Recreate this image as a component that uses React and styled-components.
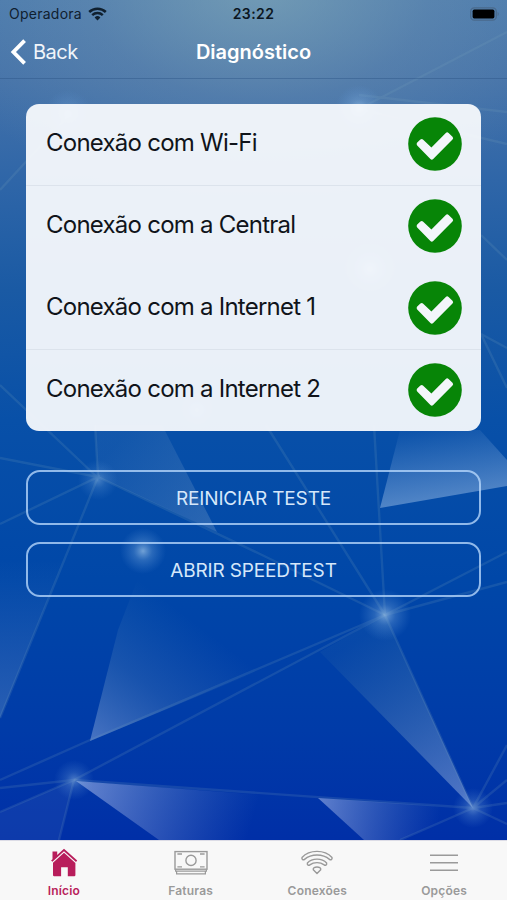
import React from 'react';
import styled, { createGlobalStyle } from 'styled-components';

const FONT = "Inter, 'Liberation Sans', sans-serif";
const ACCENT = '#b81d5b';
const TAB_GRAY = '#9a9a9a';
const CHECK_GREEN = '#078507';

const GlobalStyle = createGlobalStyle`
  body {
    margin: 0;
    font-family: ${FONT};
  }
  * {
    box-sizing: border-box;
  }
`;

const Screen = styled.div`
  position: relative;
  width: 507px;
  height: 900px;
  display: flex;
  flex-direction: column;
  overflow: hidden;
  background:
    radial-gradient(ellipse 340px 220px at 260px -10px, rgba(142, 178, 186, 0.58), rgba(130, 160, 180, 0.26) 50%, transparent),
    linear-gradient(#4a7aad 0, #4472a9 80px, #2f66a8 180px, #1a5aa4 290px, #0850a8 420px, #0047a8 580px, #003ba8 730px, #002fa7 840px);
`;

const Backdrop = styled.svg`
  position: absolute;
  top: 0;
  left: 0;
  width: 507px;
  height: 840px;
`;

const StatusBar = styled.div`
  position: relative;
  height: 27px;
  display: grid;
  grid-template-columns: 1fr auto 1fr;
  align-items: center;
  padding: 0 6px 0 9px;
  font-size: 14px;
  color: #10202f;
`;

const Carrier = styled.div`
  display: flex;
  align-items: center;
  gap: 6px;
  letter-spacing: 0.25px;
`;

const Clock = styled.div`
  margin-right: 3px;
  font-weight: 600;
  letter-spacing: 0.4px;
  color: #0b1621;
`;

const BatterySlot = styled.div`
  display: flex;
  justify-content: flex-end;
`;

const NavBar = styled.header`
  position: relative;
  height: 52px;
  display: grid;
  grid-template-columns: 1fr auto 1fr;
  align-items: center;
  padding: 0 10px 2px;
  border-bottom: 1px solid rgba(40, 80, 130, 0.4);
  color: #fff;
`;

const BackButton = styled.a`
  display: flex;
  align-items: center;
  gap: 6px;
  font-size: 20px;
  letter-spacing: -0.5px;
  color: #f0f5fa;
`;

const Title = styled.h1`
  margin: 0;
  font-size: 20px;
  font-weight: 600;
  letter-spacing: 0;
`;

const Content = styled.main`
  position: relative;
  flex: 1;
  padding: 25px 26px 0;
`;

const Card = styled.div`
  height: 327px;
  border-radius: 13px;
  background: rgba(248, 250, 253, 0.94);
  overflow: hidden;
`;

const CheckRow = styled.div`
  height: 82px;
  display: flex;
  align-items: center;
  justify-content: space-between;
  padding: 0 19px 2px 20px;
  border-bottom: 1px solid ${({ $divider }) => ($divider ? '#dce3ec' : 'transparent')};
  font-size: 24px;
  letter-spacing: -0.76px;
  color: #10141a;
`;

const CheckLabel = styled.span`
  padding-bottom: 2px;
`;

const Actions = styled.div`
  display: flex;
  flex-direction: column;
  gap: 17px;
  margin-top: 39px;
`;

const OutlineButton = styled.button`
  height: 55px;
  padding: 1px 0 0;
  border: 2px solid rgba(185, 217, 252, 0.78);
  border-radius: 14px;
  background: transparent;
  font-family: inherit;
  font-size: 19px;
  letter-spacing: -0.16px;
  color: #d5e7fa;
`;

const TabBar = styled.nav`
  position: relative;
  height: 60px;
  display: grid;
  grid-template-columns: repeat(4, 1fr);
  background: #f8f8f8;
  border-top: 1px solid #dcdce6;
`;

const Tab = styled.a`
  display: flex;
  flex-direction: column;
  align-items: center;
  padding: 7px 0 0 1px;
  gap: 5px;
  font-size: 12px;
  line-height: 16px;
  font-weight: 600;
  letter-spacing: 0.2px;
  color: ${({ $active }) => ($active ? ACCENT : TAB_GRAY)};
`;

const SignalIcon = () => (
  <svg width="19" height="14" viewBox="0 0 19 14" fill="none" stroke="#10202f">
    <path d="M1.2 5 A12 12 0 0 1 17.8 5" strokeWidth="2.5" />
    <path d="M4.2 8.1 A7.6 7.6 0 0 1 14.8 8.1" strokeWidth="2.4" />
    <path d="M9.5 13.5 L6.6 10.5 A4.2 4.2 0 0 1 12.4 10.5 Z" fill="#10202f" stroke="none" />
  </svg>
);

const BatteryIcon = () => (
  <svg width="31" height="14" viewBox="0 0 31 14">
    <rect x="0.7" y="0.8" width="25.6" height="12.4" rx="3.6" fill="none" stroke="#4a6a8c" strokeWidth="1.3" />
    <rect x="2.6" y="2.6" width="21.8" height="8.8" rx="1.6" fill="#000" />
    <path d="M27.6 5 A2.3 2.3 0 0 1 27.6 9 Z" fill="#4a6a8c" />
  </svg>
);

const ChevronIcon = () => (
  <svg width="17" height="26" viewBox="0 0 17 26" fill="none" stroke="#fff" strokeWidth="3.8">
    <path d="M14.6 1.6 L3.4 13 L14.6 24.4" />
  </svg>
);

const CheckIcon = () => (
  <svg width="54" height="54" viewBox="0 0 54 54">
    <circle cx="27" cy="27" r="26.8" fill={CHECK_GREEN} />
    <path
      d="M9.2 28.4 Q7.9 27 9.2 25.6 L12.4 22.6 Q13.8 21.4 15.2 22.7 L23.4 30.5 L37.8 16 Q39.2 14.7 40.6 16 L44.5 19.8 Q45.8 21.2 44.5 22.6 L25.2 42 Q23.8 43.3 22.4 42 Z"
      fill="#f3f6fa"
    />
  </svg>
);

const HomeIcon = () => (
  <svg width="28" height="30" viewBox="0 0 28 30">
    <path d="M2.5 3.4 H7.2 V7 L14 0.8 L27.2 12.6 L26 14 L14 3.2 L2.4 13.8 L1.1 12.4 L2.5 11.2 Z" fill={ACCENT} />
    <path d="M3 14.7 L14 4.8 L25.4 15 V27.1 Q25.4 28.3 24.2 28.3 H17.8 V19.2 H11.1 V28.3 H4.2 Q3 28.3 3 27.1 Z" fill={ACCENT} />
  </svg>
);

const BillIcon = () => (
  <svg width="34" height="30" viewBox="0 0 34 30" fill="none" stroke={TAB_GRAY}>
    <rect x="1" y="3.6" width="32" height="17.6" strokeWidth="1.4" />
    <circle cx="17" cy="12.4" r="5.1" strokeWidth="1.4" />
    <path d="M3.4 6 H8 M26 6 H30.6 M3.4 18.8 H8 M26 18.8 H30.6" strokeWidth="1.3" />
    <path d="M1.6 21.2 V23.2 H32.4 V21.2 M2.6 23.2 V25.8 H31.4 V23.2" strokeWidth="1.2" />
  </svg>
);

const WifiOutlineIcon = () => (
  <svg width="34" height="30" viewBox="0 0 34 30" fill="none" stroke={TAB_GRAY} strokeWidth="1.4" strokeLinejoin="round">
    <path d="M2 9.4 C9.5 1.4 24.5 1.4 32 9.4 C32.6 11.6 30.6 12.3 29.5 11.4 C22.6 5.6 11.4 5.6 4.5 11.4 C3.4 12.3 1.4 11.6 2 9.4 Z" />
    <path d="M7.4 15 C12 9.8 22 9.8 26.6 15 C27.2 17 25.2 17.8 24.2 16.9 C20 13.8 14 13.8 9.8 16.9 C8.8 17.8 6.8 17 7.4 15 Z" />
    <path d="M17 25.6 L13.3 21.8 C12.8 19.8 15 19 17 19 C19 19 21.2 19.8 20.7 21.8 Z" />
  </svg>
);

const MenuIcon = () => (
  <svg width="28" height="30" viewBox="0 0 28 30" stroke={TAB_GRAY} strokeWidth="1.5">
    <path d="M0 7.2 H28 M0 14.8 H28 M0 22.2 H28" />
  </svg>
);

const CHECKS = [
  { label: 'Conexão com Wi-Fi', divider: true },
  { label: 'Conexão com a Central', divider: false },
  { label: 'Conexão com a Internet 1', divider: true },
  { label: 'Conexão com a Internet 2', divider: false },
];

const ACTIONS = ['REINICIAR TESTE', 'ABRIR SPEEDTEST'];

const TABS = [
  { label: 'Início', icon: <HomeIcon />, active: true },
  { label: 'Faturas', icon: <BillIcon /> },
  { label: 'Conexões', icon: <WifiOutlineIcon /> },
  { label: 'Opções', icon: <MenuIcon /> },
];

// x, y, radius, opacity
const NODES = [
  [68, 114, 24, 0.6],
  [359, 109, 24, 0.9],
  [370, 269, 26, 0.8],
  [197, 410, 20, 0.4],
  [98, 480, 20, 0.55],
  [143, 551, 23, 0.9],
  [385, 615, 26, 0.85],
  [74, 780, 20, 0.6],
  [473, 808, 20, 0.65],
];

const LINES = [
  'M0 190 L68 116 M359 109 L507 32 M359 109 L507 144 M359 95 L507 112',
  'M0 385 L98 478 M0 458 L98 477 M0 524 L98 477 L0 718 M98 477 L95 425 M98 477 L260 554 L385 615',
  'M266 425 L385 615 M374 425 L385 615 M385 615 L507 552 M385 615 L507 582',
  'M385 615 L90 740 L0 780 M385 615 L74 780 M0 788 L74 780 L0 812 M74 780 L59 840',
  'M74 780 L473 808 M385 615 L473 808 L507 745 M473 808 L507 780 M473 808 L507 803 M473 808 L507 824 M473 808 L400 840',
  'M481 334 L507 348 M481 334 L507 388 M481 235 L507 260',
];

const Network = () => (
  <Backdrop viewBox="0 0 507 840">
    <defs>
      <radialGradient id="glow">
        <stop offset="0" stopColor="#9dc4e8" stopOpacity="0.8" />
        <stop offset="0.4" stopColor="#78a9de" stopOpacity="0.38" />
        <stop offset="1" stopColor="#5c94d8" stopOpacity="0" />
      </radialGradient>
      <linearGradient id="shardA" gradientUnits="userSpaceOnUse" x1="405" y1="505" x2="395" y2="435">
        <stop offset="0" stopColor="#8fb4e0" stopOpacity="0.55" />
        <stop offset="1" stopColor="#8fb4e0" stopOpacity="0.05" />
      </linearGradient>
      <linearGradient id="shardB" gradientUnits="userSpaceOnUse" x1="90" y1="740" x2="185" y2="615">
        <stop offset="0" stopColor="#8aa8dc" stopOpacity="0.52" />
        <stop offset="0.5" stopColor="#6c98c0" stopOpacity="0.22" />
        <stop offset="1" stopColor="#5c90b8" stopOpacity="0" />
      </linearGradient>
      <linearGradient id="shardC" gradientUnits="userSpaceOnUse" x1="473" y1="808" x2="365" y2="635">
        <stop offset="0" stopColor="#8ea9e0" stopOpacity="0.6" />
        <stop offset="1" stopColor="#5c90a8" stopOpacity="0.08" />
      </linearGradient>
      <linearGradient id="shardD" gradientUnits="userSpaceOnUse" x1="76" y1="780" x2="250" y2="830">
        <stop offset="0" stopColor="#a0b4e8" stopOpacity="0.65" />
        <stop offset="1" stopColor="#6f8ccc" stopOpacity="0" />
      </linearGradient>
      <linearGradient id="shardE" gradientUnits="userSpaceOnUse" x1="318" y1="798" x2="440" y2="815">
        <stop offset="0" stopColor="#a0b4e8" stopOpacity="0.6" />
        <stop offset="1" stopColor="#6f8ccc" stopOpacity="0" />
      </linearGradient>
      <linearGradient id="shardF" gradientUnits="userSpaceOnUse" x1="0" y1="718" x2="0" y2="560">
        <stop offset="0" stopColor="#6f9bc8" stopOpacity="0.36" />
        <stop offset="1" stopColor="#6f9bc8" stopOpacity="0" />
      </linearGradient>
      <linearGradient id="shardG" gradientUnits="userSpaceOnUse" x1="217" y1="532" x2="120" y2="440">
        <stop offset="0" stopColor="#7ba0c8" stopOpacity="0.34" />
        <stop offset="1" stopColor="#7ba0c8" stopOpacity="0.1" />
      </linearGradient>
    </defs>
    <path d="M380 508 L400 430 L480 430 L507 460 V486 Z" fill="url(#shardA)" />
    <path d="M90 741 L118 630 L145 560 L340 560 L340 637 Z" fill="url(#shardB)" />
    <path d="M473 808 L320 652 L385 615 Z" fill="url(#shardC)" />
    <path d="M76 781 L159 840 H290 V797 Z" fill="url(#shardD)" />
    <path d="M318 798 L364 840 H400 L473 808 Z" fill="url(#shardE)" />
    <path d="M0 718 L64 560 L0 560 Z" fill="url(#shardF)" />
    <path d="M98 477 L95 425 H162 L217 532 Z" fill="url(#shardG)" />
    <path d="M0 812 L74 780 L59 840 H0 Z" fill="#6f8ccc" opacity="0.12" />
    {LINES.map((d) => (
      <path key={d} d={d} fill="none" stroke="#7fa9bf" strokeWidth="2.4" opacity="0.17" />
    ))}
    {NODES.map(([x, y, r, o]) => (
      <circle key={`${x}-${y}`} cx={x} cy={y} r={r} fill="url(#glow)" opacity={o} />
    ))}
  </Backdrop>
);

const App = () => (
  <>
    <GlobalStyle />
    <Screen>
      <Network />
      <StatusBar>
        <Carrier>Operadora <SignalIcon /></Carrier>
        <Clock>23:22</Clock>
        <BatterySlot><BatteryIcon /></BatterySlot>
      </StatusBar>
      <NavBar>
        <BackButton><ChevronIcon />Back</BackButton>
        <Title>Diagnóstico</Title>
      </NavBar>
      <Content>
        <Card>
          {CHECKS.map(({ label, divider }) => (
            <CheckRow key={label} $divider={divider}>
              <CheckLabel>{label}</CheckLabel>
              <CheckIcon />
            </CheckRow>
          ))}
        </Card>
        <Actions>
          {ACTIONS.map((label) => (
            <OutlineButton key={label}>{label}</OutlineButton>
          ))}
        </Actions>
      </Content>
      <TabBar>
        {TABS.map(({ label, icon, active }) => (
          <Tab key={label} $active={active}>
            {icon}
            {label}
          </Tab>
        ))}
      </TabBar>
    </Screen>
  </>
);

export default App;
